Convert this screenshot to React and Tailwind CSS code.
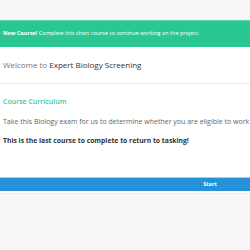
import React from 'react';

function App() {
  return (
    <div className="w-[250px] h-[250px] overflow-hidden bg-[#f6f6f6] font-['Open_Sans',sans-serif]">
      <div className="w-[420px]">
        <div className="h-[20px] bg-[#f6f6f6]"></div>

        {/* banner */}
        <div className="h-[27px] bg-[#2bc792] border-t border-[#5fd6ad] flex items-center px-[3px]">
          <p className="text-[5.5px] leading-none text-white">
            <span className="font-bold">New Course!</span> Complete this short course to continue working on the project.
          </p>
        </div>

        <div className="bg-white">
          <div className="h-[37px] flex items-center px-[3px] border-b border-[#ececec]">
            <h1 className="text-[8px] leading-none text-[#777]">
              Welcome to <span className="text-[#333]">Expert Biology Screening</span>
            </h1>
          </div>

          <div className="px-[3px] pt-[14px] pb-[27px]">
            <h2 className="text-[7px] leading-none font-semibold text-[#3cc99a]">Course Curriculum</h2>
            <p className="mt-[13px] text-[7px] leading-none text-[#666]">
              Take this Biology exam for us to determine whether you are eligible to work on our projects.
            </p>
            <p className="mt-[13px] text-[6.8px] leading-none font-bold text-[#333]">
              This is the last course to complete to return to tasking!
            </p>
          </div>
        </div>

        <div className="h-[5px] bg-white"></div>
        <div className="border-t border-[#9fd0ef] h-[14px] bg-[#2592d8] flex items-center justify-center">
          <span className="text-[5.5px] leading-none font-bold text-white">Start</span>
        </div>
        <div className="h-[3px] bg-white border-b border-[#eeeeee]"></div>
      </div>
    </div>
  );
}

export default App;
